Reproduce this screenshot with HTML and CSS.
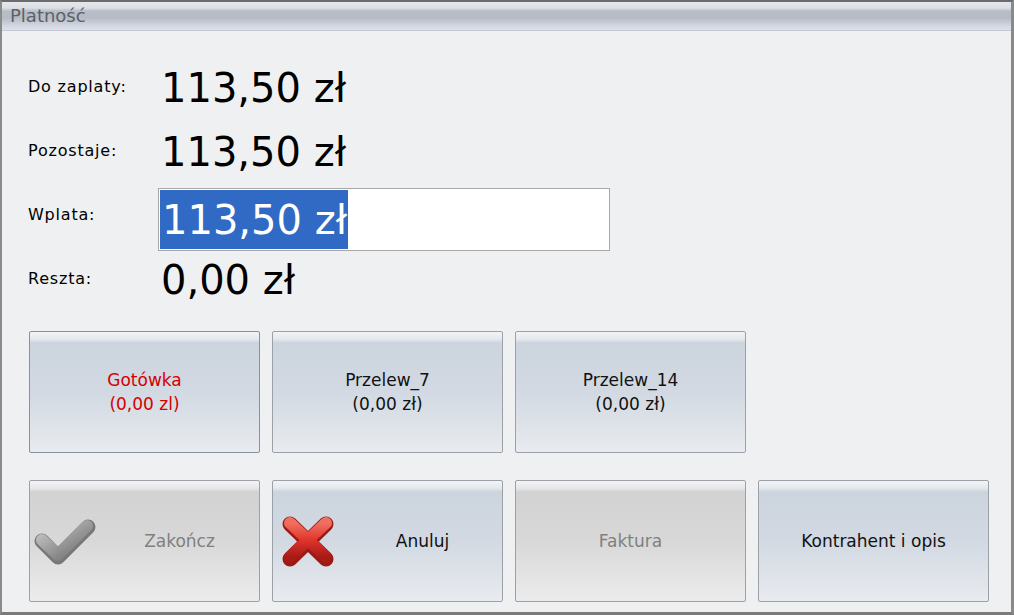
FILE: index.html
```html
<!DOCTYPE html>
<html lang="pl">
<head>
    <meta charset="UTF-8">
    <title>Płatność</title>
    <link rel="stylesheet" href="styles.css">
</head>
<body>
    <div class="window">
        <div class="titlebar">Platność</div>
        <div class="content">
            <div class="rows">
                <div class="row">
                    <div class="label">Do zaplaty:</div>
                    <div class="value">113,50 zł</div>
                </div>
                <div class="row">
                    <div class="label">Pozostaje:</div>
                    <div class="value">113,50 zł</div>
                </div>
                <div class="row">
                    <div class="label">Wplata:</div>
                    <div class="input"><span class="selected">113,50 zł</span></div>
                </div>
                <div class="row">
                    <div class="label">Reszta:</div>
                    <div class="value">0,00 zł</div>
                </div>
            </div>
            <div class="button-row payments">
                <button class="button active red"><span class="text">Gotówka<br>(0,00 zl)</span></button>
                <button class="button"><span class="text">Przelew_7<br>(0,00 zł)</span></button>
                <button class="button"><span class="text">Przelew_14<br>(0,00 zł)</span></button>
            </div>
            <div class="button-row actions">
                <button class="button disabled">
                    <span class="icon">
                        <svg width="66" height="52" viewBox="0 0 66 52">
                            <defs>
                                <linearGradient id="chk" x1="0" y1="0" x2="1" y2="1">
                                    <stop offset="0" stop-color="#c8c8c8"/>
                                    <stop offset="0.5" stop-color="#9a9a9a"/>
                                    <stop offset="1" stop-color="#6e6e6e"/>
                                </linearGradient>
                            </defs>
                            <polyline points="10,26 26,42 56,12" fill="none" stroke="#777" stroke-width="15" stroke-linecap="round" stroke-linejoin="round"/>
                            <polyline points="10,25 26,40 55,11" fill="none" stroke="url(#chk)" stroke-width="12" stroke-linecap="round" stroke-linejoin="round"/>
                        </svg>
                    </span>
                    <span class="text">Zakończ</span>
                </button>
                <button class="button">
                    <span class="icon">
                        <svg width="56" height="52" viewBox="0 0 56 52">
                            <defs>
                                <linearGradient id="xg" x1="0" y1="0" x2="0" y2="1">
                                    <stop offset="0" stop-color="#f07060"/>
                                    <stop offset="0.5" stop-color="#e0342c"/>
                                    <stop offset="1" stop-color="#a81a16"/>
                                </linearGradient>
                            </defs>
                            <g stroke-linecap="round">
                                <line x1="10" y1="9" x2="46" y2="44" stroke="#9c1a16" stroke-width="15"/>
                                <line x1="46" y1="9" x2="10" y2="44" stroke="#9c1a16" stroke-width="15"/>
                                <line x1="10" y1="8" x2="46" y2="42" stroke="url(#xg)" stroke-width="12"/>
                                <line x1="46" y1="8" x2="10" y2="42" stroke="url(#xg)" stroke-width="12"/>
                            </g>
                        </svg>
                    </span>
                    <span class="text">Anuluj</span>
                </button>
                <button class="button disabled"><span class="text">Faktura</span></button>
                <button class="button"><span class="text">Kontrahent i opis</span></button>
            </div>
        </div>
    </div>
</body>
</html>
```

FILE: styles.css
```css
html, body {
    margin: 0;
    height: 100%;
}
body {
    font-family: "DejaVu Sans", sans-serif;
    background: #eff0f2;
    overflow: hidden;
}
.window {
    box-sizing: border-box;
    height: 615px;
    border-top: 2px solid #6c6c6c;
    border-left: 2px solid #8a8a8a;
    border-right: 3px solid #8a8a8a;
    border-bottom: 3px solid #7a7a7a;
    display: flex;
    flex-direction: column;
}
.titlebar {
    height: 29px;
    box-sizing: border-box;
    padding: 3px 0 0 8px;
    font-size: 18px;
    color: #5c6068;
    background: linear-gradient(to bottom, #e4e7ec 0, #dcdfe5 6px, #b8bec8 9px, #b6bcc6 16px, #d4d8e2 24px, #dde0ea 28px);
    border-bottom: 1px solid #c4c8d0;
}
.content {
    flex: 1;
    padding: 23px 0 0 27px;
}
.rows {
    margin-left: -1px;
}
.row {
    display: flex;
    align-items: center;
    height: 64px;
}
.label {
    width: 133px;
    font-size: 16px;
    letter-spacing: 0.8px;
    color: #000;
}
.value {
    padding-top: 3px;
    font-size: 40px;
    color: #000;
}
.input {
    box-sizing: border-box;
    width: 452px;
    height: 63px;
    margin: 10px 0 0 -3px;
    padding: 1px;
    border: 1px solid #a8a8a8;
    background: #fff;
    display: flex;
}
.selected {
    display: flex;
    align-items: center;
    padding: 2px 1px 0 2px;
    font-size: 40px;
    color: #fff;
    background: #316ac5;
}
.button-row {
    display: flex;
    gap: 12px;
}
.payments {
    margin-top: 21px;
}
.actions {
    margin-top: 27px;
}
.button {
    box-sizing: border-box;
    width: 231px;
    height: 122px;
    padding: 0;
    display: flex;
    align-items: center;
    border: 1px solid #9ca1a8;
    border-radius: 2px;
    font-family: "DejaVu Sans", sans-serif;
    font-size: 17px;
    line-height: 24px;
    color: #111;
    background: linear-gradient(to bottom, #f2f4f6 0, #e6e9ed 7px, #ccd4de 11px, #d2d9e2 50%, #e8ebef 100%);
}
.button .text {
    flex: 1;
    text-align: center;
}
.button .icon {
    width: 70px;
    display: flex;
    justify-content: center;
}
.button.active {
    border-color: #8792a0;
}
.button.red {
    color: #d40000;
}
.button.disabled {
    color: #808080;
    background: linear-gradient(to bottom, #f4f4f4 0, #e8e8e8 7px, #d2d2d2 11px, #d8d8d8 50%, #ececec 100%);
}
```
